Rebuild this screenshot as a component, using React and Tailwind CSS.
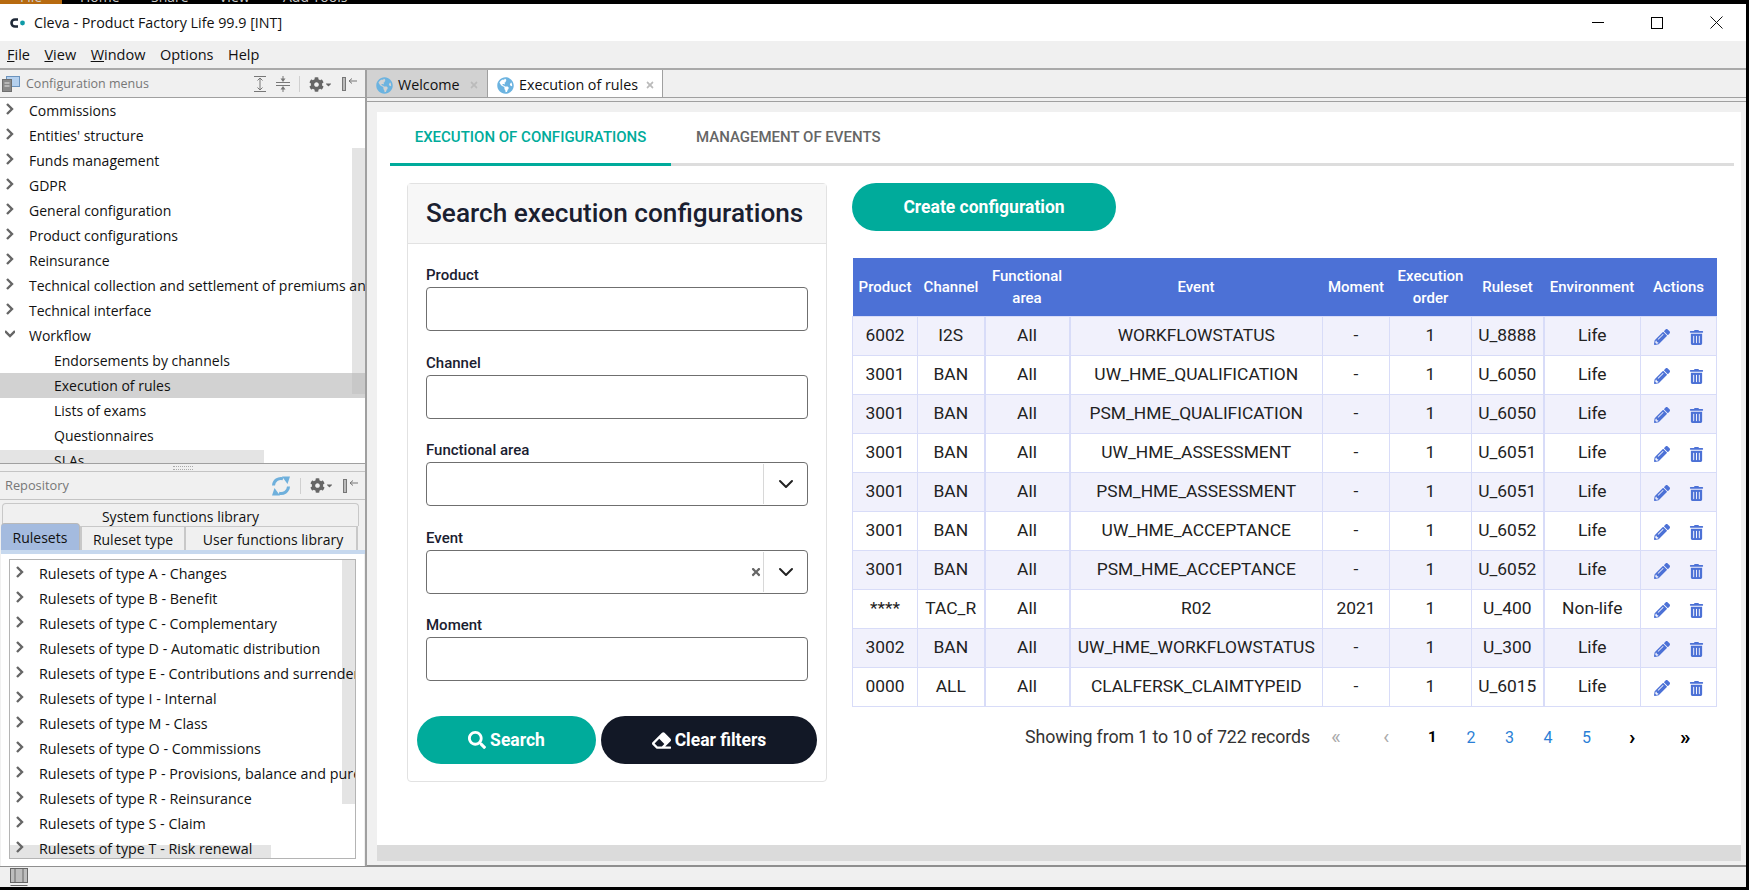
import React from "react";
import { FaPencilAlt, FaTrashAlt, FaSearch, FaEraser, FaCog, FaTimes, FaGlobeAmericas, FaCaretDown } from "react-icons/fa";
import { ChevronDown } from "lucide-react";

const configTree = [
  ["Commissions", 0],
  ["Entities' structure", 0],
  ["Funds management", 0],
  ["GDPR", 0],
  ["General configuration", 0],
  ["Product configurations", 0],
  ["Reinsurance", 0],
  ["Technical collection and settlement of premiums and claims", 0],
  ["Technical interface", 0],
  ["Workflow", 2],
  ["Endorsements by channels", 1],
  ["Execution of rules", 1, true],
  ["Lists of exams", 1],
  ["Questionnaires", 1],
  ["SLAs", 1],
];

const rulesets = [
  "Rulesets of type A - Changes",
  "Rulesets of type B - Benefit",
  "Rulesets of type C - Complementary",
  "Rulesets of type D - Automatic distribution",
  "Rulesets of type E - Contributions and surrenders",
  "Rulesets of type I - Internal",
  "Rulesets of type M - Class",
  "Rulesets of type O - Commissions",
  "Rulesets of type P - Provisions, balance and pure premiums",
  "Rulesets of type R - Reinsurance",
  "Rulesets of type S - Claim",
  "Rulesets of type T - Risk renewal",
];

const rows = [
  ["6002", "I2S", "All", "WORKFLOWSTATUS", "-", "1", "U_8888", "Life"],
  ["3001", "BAN", "All", "UW_HME_QUALIFICATION", "-", "1", "U_6050", "Life"],
  ["3001", "BAN", "All", "PSM_HME_QUALIFICATION", "-", "1", "U_6050", "Life"],
  ["3001", "BAN", "All", "UW_HME_ASSESSMENT", "-", "1", "U_6051", "Life"],
  ["3001", "BAN", "All", "PSM_HME_ASSESSMENT", "-", "1", "U_6051", "Life"],
  ["3001", "BAN", "All", "UW_HME_ACCEPTANCE", "-", "1", "U_6052", "Life"],
  ["3001", "BAN", "All", "PSM_HME_ACCEPTANCE", "-", "1", "U_6052", "Life"],
  ["****", "TAC_R", "All", "R02", "2021", "1", "U_400", "Non-life"],
  ["3002", "BAN", "All", "UW_HME_WORKFLOWSTATUS", "-", "1", "U_300", "Life"],
  ["0000", "ALL", "All", "CLALFERSK_CLAIMTYPEID", "-", "1", "U_6015", "Life"],
];

const headers = ["Product", "Channel", "Functional area", "Event", "Moment", "Execution order", "Ruleset", "Environment", "Actions"];

function Arrow({ open }) {
  return (
    <svg width="10" height="12" viewBox="0 0 10 12" className="shrink-0 -mt-[3px]" fill="none" stroke="#666666" strokeWidth="2.4">
      {open ? <path d="M0 3l5 5 5-5" /> : <path d="M2 1l5 5-5 5" />}
    </svg>
  );
}

function ExpandIcon() {
  return (
    <svg width="14" height="16" viewBox="0 0 14 16" fill="none" stroke="#777777">
      <path d="M1 .5h12M1 15.5h12M7 2v12M4.5 4.5L7 2l2.5 2.5M4.5 11.5L7 14l2.5-2.5" />
    </svg>
  );
}

function CollapseIcon() {
  return (
    <svg width="14" height="16" viewBox="0 0 14 16" fill="none" stroke="#777777">
      <path d="M0 6.5h14M0 9.5h14M7 0v4" />
      <path d="M4.5 2.5h5L7 6zM4.5 13.5h5L7 10z" fill="#777777" stroke="none" />
      <path d="M7 12v4" />
    </svg>
  );
}

function SyncIcon() {
  return (
    <svg width="20" height="20" viewBox="0 0 20 20" fill="none" stroke="#6fb0dc" strokeWidth="3">
      <path d="M2.5 9.5A7.5 7.5 0 0 1 12 2.7" />
      <path d="M17.5 10.5A7.5 7.5 0 0 1 8 17.3" />
      <path d="M11 .5h8L16.5 8zM9 19.5H1L3.5 12z" fill="#6fb0dc" stroke="none" />
    </svg>
  );
}

function PanelPin() {
  return (
    <svg width="16" height="14" viewBox="0 0 16 14" fill="none">
      <rect x="0.5" y="0.5" width="3" height="13" fill="#bbbbbb" stroke="#777777" />
      <path d="M7 4h8M7 4l3-2.5M7 4l3 2.5" stroke="#777777" />
    </svg>
  );
}

function ViewMenu() {
  return (
    <span className="flex items-center text-[#666666]">
      <FaCog className="text-[15px]" />
      <FaCaretDown className="text-[9px]" />
    </span>
  );
}

function ConfigIcon() {
  return (
    <svg width="18" height="16" viewBox="0 0 18 16" fill="none">
      <rect x="4.5" y="0.5" width="13" height="10" fill="#b4d0ee" stroke="#6b93bd" />
      <rect x="0.5" y="3.5" width="9" height="12" fill="#8a8a8a" stroke="#6f6f6f" />
      <path d="M2.5 7h5M2.5 10h5" stroke="#e6e6e6" />
    </svg>
  );
}

function TopStrip() {
  return (
    <div className="h-1 bg-black flex items-end overflow-hidden text-[14px] leading-none text-[#cccccc]">
      <div className="w-[62px] bg-[#b76a10] text-center">File</div>
      <div className="ml-[18px] w-[71px]">Home</div>
      <div className="w-[68px]">Share</div>
      <div className="w-[64px]">View</div>
      <div>Add Tools</div>
    </div>
  );
}

function TitleBar() {
  return (
    <div className="h-[37px] bg-white flex items-center pl-[10px] text-[14.3px] text-[#111111]">
      <svg width="16" height="10" viewBox="0 0 16 10" className="mr-[2px]">
        <path d="M8 1.5H5a3.5 3.5 0 000 7h3" fill="none" stroke="#1f2937" strokeWidth="2.6" />
        <circle cx="12.5" cy="5" r="2.4" fill="#0e9aa7" />
      </svg>
      <span className="ml-[6px]">Cleva - Product Factory Life 99.9 [INT]</span>
      <div className="ml-auto flex items-center pr-[23px]">
        <span className="w-3 h-px bg-black mr-[47px]" />
        <span className="w-3 h-3 border border-black mr-[47px]" />
        <svg width="13" height="13" viewBox="0 0 13 13" stroke="#111111">
          <path d="M.5.5l12 12M12.5.5l-12 12" />
        </svg>
      </div>
    </div>
  );
}

function MenuBar() {
  return (
    <div className="h-[29px] bg-[#f0f0f0] border-b-2 border-[#a9a9a9] flex items-center pl-[7px] pt-px gap-[14.5px] text-[14.5px] text-[#111111]">
      <span><u>F</u>ile</span>
      <span><u>V</u>iew</span>
      <span><u>W</u>indow</span>
      <span>Options</span>
      <span>Help</span>
    </div>
  );
}

function ConfigPanel() {
  return (
    <div className="h-[394px] shrink-0 flex flex-col border-b border-[#a0a0a0] bg-white">
      <div className="h-[28px] shrink-0 bg-[#f0f0f0] border-b border-[#a0a0a0] flex items-center pl-[2px] pr-[7px] pt-px text-[12.5px] text-[#777777]">
        <ConfigIcon />
        <span className="ml-[6px]">Configuration menus</span>
        <div className="ml-auto flex items-center gap-[9px]">
          <ExpandIcon />
          <CollapseIcon />
          <span className="w-px h-[16px] bg-[#d0d0d0]" />
          <ViewMenu />
          <PanelPin />
        </div>
      </div>
      <div className="relative flex-1 overflow-hidden">
        <div className="absolute right-0 top-[50px] w-[13px] h-[246px] bg-[#e4e4e4]" />
        <div className="absolute left-0 bottom-0 w-[264px] h-[13px] bg-[#e4e4e4]" />
        {configTree.map(([label, kind, selected]) => (
          <div key={label} className={`relative h-[25px] flex items-center text-[14px] text-[#111111] whitespace-nowrap ${selected ? "bg-[#d2d2d2]" : ""}`}>
            {kind === 1 ? (
              <span className="pl-[54px]">{label}</span>
            ) : (
              <>
                <span className="w-[29px] shrink-0 pl-[5px] flex"><Arrow open={kind === 2} /></span>
                <span>{label}</span>
              </>
            )}
          </div>
        ))}
        <div className="absolute right-0 top-[275px] w-[13px] h-[21px] bg-[#c8c8c8]" />
      </div>
    </div>
  );
}

function RepositoryPanel() {
  return (
    <div className="flex-1 min-h-0 flex flex-col bg-[#f0f0f0] relative">
      <div className="absolute top-[-5px] left-[173px] w-[20px] h-[4px] border-y border-dotted border-[#aaaaaa]" />
      <div className="h-[29px] shrink-0 border-y border-[#c4c4c4] flex items-center pl-[5px] pr-[6px] text-[12.8px] text-[#777777]">
        <span>Repository</span>
        <div className="ml-auto flex items-center gap-[9px]">
          <SyncIcon />
          <span className="w-px h-[16px] bg-[#d0d0d0]" />
          <ViewMenu />
          <PanelPin />
        </div>
      </div>
      <div className="text-[14px] text-[#111111] pt-[3px] shrink-0">
        <div className="h-[23px] ml-[2px] w-[357px] border border-b-0 border-[#c8c8c8] rounded-t-sm flex items-center justify-center pt-[3px]">System functions library</div>
        <div className="h-[24px] flex items-stretch">
          <div className="w-[79px] h-[27px] -mt-[3px] ml-[1px] bg-[#a4bbdf] border-t border-r border-[#b9b9b9] rounded-t-sm flex items-center justify-center relative">Rulesets</div>
          <div className="w-[106px] border-x-2 border-t border-[#c8c8c8] flex items-center justify-center pt-[1px]">Ruleset type</div>
          <div className="w-[172px] border-r-2 border-t border-[#c8c8c8] flex items-center justify-center pt-[1px] pl-[4px]">User functions library</div>
        </div>
        <div className="h-[4px] bg-[#c6d8ee] w-[364px] ml-[1px]" />
      </div>
      <div className="flex-1 bg-white mx-[1px] px-[8px] pt-[5px] pb-[7px] flex flex-col min-h-0">
        <div className="relative flex-1 border border-[#b4b4b4] overflow-hidden pt-[1px]">
          <div className="absolute right-0 top-0 w-[13px] h-[244px] bg-[#e4e4e4]" />
          <div className="absolute left-0 bottom-0 w-[261px] h-[13px] bg-[#e4e4e4]" />
          {rulesets.map((label) => (
            <div key={label} className="relative h-[25px] flex items-center text-[14.3px] text-[#111111] whitespace-nowrap">
              <span className="w-[29px] shrink-0 pl-[5px] flex"><Arrow /></span>
              <span>{label}</span>
            </div>
          ))}
        </div>
      </div>
    </div>
  );
}

function Field({ label, select, clear }) {
  return (
    <div className="mb-[19.6px]">
      <div className="text-[15px] font-medium leading-[24px] text-[#1a2030]">{label}</div>
      <div className="h-[44px] border border-[#6f6f6f] rounded-[4px] bg-white flex items-center">
        {select && (
          <>
            {clear && <FaTimes className="ml-auto text-[12px] text-[#666666]" />}
            <div className={`${clear ? "ml-[1px]" : "ml-auto"} w-[44px] h-[40px] border-l border-[#d8d8d8] flex items-center justify-center`}>
              <ChevronDown size={24} strokeWidth={2} className="text-[#222222]" />
            </div>
          </>
        )}
      </div>
    </div>
  );
}

function SearchCard() {
  return (
    <div className="w-[420px] h-[599px] shrink-0 border border-[#e2e2e2] rounded-[4px] bg-white">
      <div className="h-[60px] bg-[#f7f7f7] border-b border-[#e2e2e2] flex items-center pl-[18px] text-[26.2px] font-medium text-[#1a2030] whitespace-nowrap">
        Search execution configurations
      </div>
      <div className="px-[18px] pt-[19px]">
        <Field label="Product" />
        <Field label="Channel" />
        <Field label="Functional area" select />
        <Field label="Event" select clear />
        <Field label="Moment" />
      </div>
      <div className="flex pl-[9px] gap-[5px] mt-[35px]">
        <button className="w-[179px] h-[48px] rounded-full bg-[#00ab9b] text-white text-[17.5px] font-bold flex items-center justify-center gap-[4px]">
          <FaSearch className="text-[18px]" />
          Search
        </button>
        <button className="w-[216px] h-[48px] rounded-full bg-[#121826] text-white text-[17.5px] font-bold flex items-center justify-center gap-[4px]">
          <FaEraser className="text-[19px]" />
          Clear filters
        </button>
      </div>
    </div>
  );
}

function ResultsTable() {
  return (
    <table className="table-fixed border-collapse w-[864px] text-center">
      <colgroup>
        <col className="w-[65px]" />
        <col className="w-[67px]" />
        <col className="w-[85px]" />
        <col className="w-[253px]" />
        <col className="w-[67px]" />
        <col className="w-[82px]" />
        <col className="w-[72px]" />
        <col className="w-[97px]" />
        <col className="w-[76px]" />
      </colgroup>
      <thead>
        <tr className="h-[58px] bg-[#4c71d6] text-white text-[15px] leading-[22px]">
          {headers.map((h) => (
            <th key={h} className="font-medium px-[4px]">{h}</th>
          ))}
        </tr>
      </thead>
      <tbody className="text-[17.4px] text-[#222222]">
        {rows.map((row, i) => (
          <tr key={i} className={`h-[39px] ${i % 2 === 0 ? "bg-[#f1f1fc]" : "bg-white"}`}>
            {row.map((cell, j) => (
              <td key={j} className={`border border-[#d8dcf8] p-0 whitespace-nowrap ${j === 1 || j === 2 || j === 6 ? "border-r-2" : ""}`}>{cell}</td>
            ))}
            <td className="border border-[#d8dcf8] p-0">
              <div className="flex items-center justify-center gap-[19px] pt-[3px] text-[#4c71d6]">
                <FaPencilAlt className="text-[16px]" />
                <FaTrashAlt className="text-[15px]" />
              </div>
            </td>
          </tr>
        ))}
      </tbody>
    </table>
  );
}

function Pagination() {
  return (
    <div className="flex items-center h-[24px] mt-[19px] pl-[173px] text-[17.8px] text-[#333333] tracking-[-0.1px]">
      <span className="w-[306px] whitespace-nowrap">Showing from 1 to 10 of 722 records</span>
      <span className="w-[52px] text-[#aaaaaa] text-[21px]">«</span>
      <span className="w-[45px] text-[#aaaaaa] text-[21px]">‹</span>
      <span className="w-[38.5px] font-bold text-black text-[15px]">1</span>
      <span className="w-[38.5px] text-[#2b7fd6] text-[16px]">2</span>
      <span className="w-[38.5px] text-[#2b7fd6] text-[16px]">3</span>
      <span className="w-[38.5px] text-[#2b7fd6] text-[16px]">4</span>
      <span className="w-[47px] text-[#2b7fd6] text-[16px]">5</span>
      <span className="w-[51px] text-black font-bold text-[21px]">›</span>
      <span className="text-black font-bold text-[21px]">»</span>
    </div>
  );
}

function Content() {
  return (
    <div className="flex-1 min-w-0 flex flex-col bg-[#f0f0f0]">
      <div className="h-[28px] shrink-0 flex items-stretch border-b border-[#a0a0a0] text-[14.3px] text-[#111111] whitespace-nowrap">
        <div className="w-[121px] bg-[#d2d2d2] border-r border-[#a0a0a0] flex items-center pl-[9px] pt-[3px] gap-[5px]">
          <FaGlobeAmericas className="text-[17px] text-[#6bb3e0]" />
          <span>Welcome</span>
          <FaTimes className="text-[10px] text-[#bbbbbb] ml-[4px]" />
        </div>
        <div className="w-[175px] bg-white border-r border-[#a0a0a0] flex items-center pl-[9px] pt-[3px] gap-[5px]">
          <FaGlobeAmericas className="text-[17px] text-[#6bb3e0]" />
          <span>Execution of rules</span>
          <FaTimes className="text-[10px] text-[#bbbbbb] ml-[2px]" />
        </div>
      </div>
      <div className="h-[3px] shrink-0" />
      <div className="h-px bg-[#a0a0a0] shrink-0" />
      <div className="flex-1 pt-[10px] pl-[10px] pr-[5px] min-h-0">
        <div className="h-full bg-white flex flex-col font-['Roboto',sans-serif]">
          <div className="h-[54px] shrink-0 ml-[13px] mr-[7px] flex border-b-[3px] border-[#dddddd]">
            <div className="w-[281px] h-[54px] border-b-[3px] border-[#00ab9b] flex items-center justify-center text-[15px] font-medium text-[#00ab9b]">
              EXECUTION OF CONFIGURATIONS
            </div>
            <div className="ml-[25px] flex items-center text-[15px] font-medium text-[#666666]">MANAGEMENT OF EVENTS</div>
          </div>
          <div className="flex-1 flex pl-[30px] pt-[17px] min-h-0">
            <SearchCard />
            <div className="ml-[25px] flex flex-col">
              <button className="w-[264px] h-[48px] shrink-0 rounded-full bg-[#00ab9b] text-white text-[17.5px] font-bold">Create configuration</button>
              <div className="mt-[27px]">
                <ResultsTable />
                <Pagination />
              </div>
            </div>
          </div>
          <div className="h-[16px] shrink-0 bg-[#dbdbdb]" />
        </div>
      </div>
      <div className="h-[5px] shrink-0 border-b border-[#8f8f8f]" />
    </div>
  );
}

export default function App() {
  return (
    <div className="w-[1749px] h-[890px] overflow-hidden flex flex-col bg-black font-['Open_Sans',sans-serif]">
      <TopStrip />
      <div className="w-[1746px] flex-1 min-h-0 flex flex-col bg-[#f0f0f0]">
        <TitleBar />
        <MenuBar />
        <div className="flex-1 min-h-0 flex">
          <aside className="w-[367px] shrink-0 flex flex-col border-r-2 border-[#a0a0a0]">
            <ConfigPanel />
            <div className="h-[7px] shrink-0" />
            <RepositoryPanel />
          </aside>
          <Content />
        </div>
        <div className="h-[21px] shrink-0 bg-[#f0f0f0] border-t border-[#8f8f8f] flex items-center pl-[10px]">
          <svg width="18" height="18" viewBox="0 0 18 18" fill="#bdbdbd" stroke="#666666">
            <rect x="0.5" y="0.5" width="17" height="14" />
            <path d="M5 .5v14M13 .5v14M.5 17.5h17" />
          </svg>
        </div>
      </div>
      <div className="h-[3px] shrink-0 bg-black" />
    </div>
  );
}
